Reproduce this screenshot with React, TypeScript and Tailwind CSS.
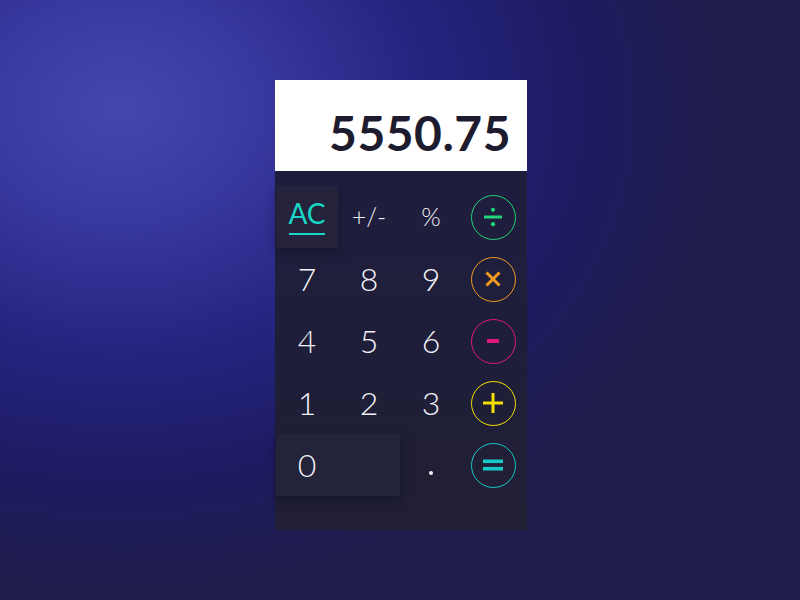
const font = { fontFamily: "Lato, 'Open Sans', sans-serif" };

function OpIcon({ kind, color }: { kind: string; color: string }) {
  return (
    <svg width="24" height="24" viewBox="0 0 24 24" fill={color} stroke={color}>
      {kind === "div" && (
        <>
          <rect x="3" y="10.5" width="18" height="3" stroke="none" />
          <circle cx="12" cy="4.8" r="2.1" stroke="none" />
          <circle cx="12" cy="19.2" r="2.1" stroke="none" />
        </>
      )}
      {kind === "mul" && (
        <path d="M5.5 5.5 L18.5 18.5 M18.5 5.5 L5.5 18.5" strokeWidth="3" fill="none" />
      )}
      {kind === "sub" && <rect x="6" y="10" width="12" height="4" rx="0.5" stroke="none" />}
      {kind === "add" && <path d="M12 2 V22 M2 12 H22" strokeWidth="3" fill="none" />}
      {kind === "eq" && (
        <>
          <rect x="2" y="6.5" width="20" height="3.6" stroke="none" />
          <rect x="2" y="13.9" width="20" height="3.6" stroke="none" />
        </>
      )}
    </svg>
  );
}

function Op({ kind, color }: { kind: string; color: string }) {
  return (
    <div className="flex h-[62px] w-[62px] items-center justify-center">
      <div
        className="flex h-[45px] w-[45px] items-center justify-center rounded-full border-[1.5px]"
        style={{ borderColor: color }}
      >
        <OpIcon kind={kind} color={color} />
      </div>
    </div>
  );
}

function Key({ label, small }: { label: string; small?: boolean }) {
  return (
    <div
      className={`flex h-[62px] w-[62px] items-center justify-center font-light text-[#f2f2f8] ${
        small ? "text-[25px]" : "text-[32px]"
      }`}
    >
      {label}
    </div>
  );
}

export default function App() {
  return (
    <div
      className="flex h-screen w-full justify-center pl-[2px] bg-[radial-gradient(ellipse_75%_80%_at_15%_18%,#4646ac_0%,#3a39a0_22%,#25237f_52%,#1d1b60_78%,#1f1d4c_100%)]"
      style={font}
    >
      <div className="mt-[80px] h-[450px] w-[252px]">
        {/* Display */}
        <div className="flex h-[91px] items-center justify-end bg-white pr-[16px] pt-[14px]">
          <span className="text-[48px] font-bold leading-none tracking-[0.5px] text-[#1d1c2e]">
            5550.75
          </span>
        </div>

        {/* Keypad */}
        <div className="h-[359px] bg-gradient-to-b from-[#1e1d3e] to-[#201f34] pl-[1px] pt-[15px]">
          <div className="grid grid-cols-[62px_62px_62px_62px]">
            <div className="flex h-[62px] w-[62px] flex-col items-center justify-center bg-[#24233b] shadow-[0_4px_10px_rgba(10,10,30,0.35)]">
              <span className="text-[28px] leading-none text-[#19d6c6]">AC</span>
              <span className="mt-[6px] h-[2px] w-[36px] bg-[#19d6c6]" />
            </div>
            <Key label="+/-" small />
            <Key label="%" small />
            <Op kind="div" color="#21d47a" />

            <Key label="7" />
            <Key label="8" />
            <Key label="9" />
            <Op kind="mul" color="#f29a1f" />

            <Key label="4" />
            <Key label="5" />
            <Key label="6" />
            <Op kind="sub" color="#e2167c" />

            <Key label="1" />
            <Key label="2" />
            <Key label="3" />
            <Op kind="add" color="#f4e000" />

            <div className="col-span-2 flex h-[62px] items-center bg-[#23233a] shadow-[0_4px_10px_rgba(10,10,30,0.35)]">
              <span className="flex w-[62px] justify-center text-[32px] font-light text-[#f2f2f8]">0</span>
            </div>
            <div className="flex h-[62px] w-[62px] items-center justify-center pt-[16px]">
              <span className="h-[4px] w-[4px] rounded-full bg-[#f2f2f8]" />
            </div>
            <Op kind="eq" color="#15c9c9" />
          </div>
        </div>
      </div>
    </div>
  );
}
